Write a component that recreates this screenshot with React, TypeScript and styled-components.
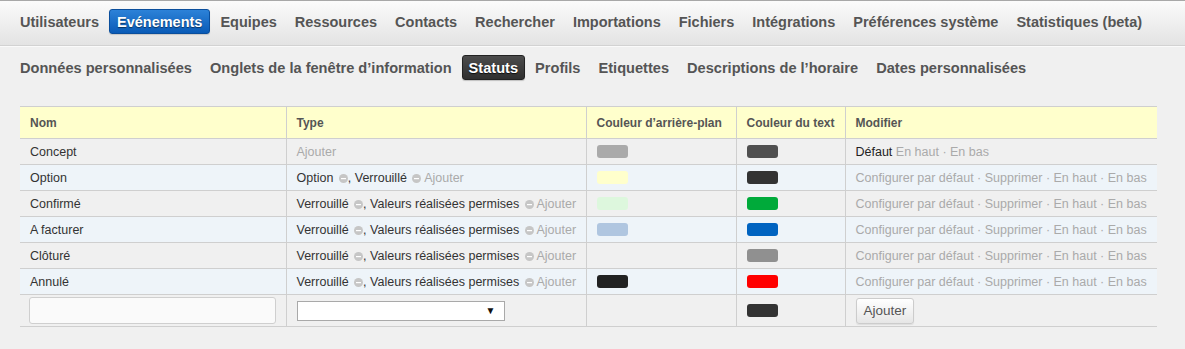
import React from "react";
import styled, { createGlobalStyle, css } from "styled-components";

const Global = createGlobalStyle`
  html, body { margin: 0; padding: 0; background: #f0f0f0; }
  body { font-family: "Liberation Sans", Arial, sans-serif; color: #333; }
`;

const TopBar = styled.nav`
  display: flex;
  align-items: center;
  gap: 2px;
  height: 25px;
  padding: 8px 12px 11px;
  font-size: 14.5px;
  border-top: 1px solid #a8a8a8;
  border-bottom: 1px solid #d2d2d2;
  box-shadow: 0 1px 0 #fafafa;
  background: linear-gradient(#fbfbfb, #e3e3e3);
`;

const SubBar = styled.nav`
  display: flex;
  align-items: center;
  gap: 2px;
  height: 25px;
  padding: 8px 12px 0;
  margin-top: 1px;
  font-size: 14.6px;
`;

const NavItem = styled.a<{ $active?: "blue" | "dark" }>`
  display: flex;
  align-items: center;
  box-sizing: border-box;
  height: 25px;
  padding: 0 7px;
  font-size: inherit;
  font-weight: bold;
  color: #555;
  text-decoration: none;
  white-space: nowrap;
  border-radius: 3px;
  border: 1px solid transparent;
  ${(p) =>
    p.$active === "blue" &&
    css`
      color: #fff;
      background: linear-gradient(#2c82d8, #0a5bb7);
      border-color: #0a4e9c;
      text-shadow: 0 1px 1px rgba(0, 0, 0, 0.5);
      box-shadow: 0 1px 1px rgba(0, 0, 0, 0.15);
    `}
  ${(p) =>
    p.$active === "dark" &&
    css`
      padding: 0 6px;
      color: #fff;
      background: linear-gradient(#4c4c4c, #2f2f2f);
      border-color: #222;
      text-shadow: 0 1px 1px rgba(0, 0, 0, 0.8);
      box-shadow: 0 1px 1px rgba(0, 0, 0, 0.2);
    `}
`;

const TableWrap = styled.div`
  padding: 26px 28px 0 20px;
`;

const Table = styled.table`
  width: 1137px;
  border-collapse: collapse;
  table-layout: fixed;
  font-size: 12.5px;
`;

const HeadCell = styled.th`
  height: 32px;
  padding: 0 10px;
  box-sizing: border-box;
  background: #ffffcc;
  color: #555;
  font-size: 12px;
  font-weight: bold;
  text-align: left;
  border-top: 1px solid #cfcfcf;
  border-bottom: 1px solid #cfcfcf;
  border-left: 1px solid #cfcfcf;
  white-space: nowrap;
  &:first-child { border-left: none; }
`;

const Row = styled.tr<{ $alt?: boolean }>`
  background: ${(p) => (p.$alt ? "#eef4f9" : "transparent")};
`;

const Cell = styled.td<{ $tall?: boolean }>`
  height: ${(p) => (p.$tall ? 32 : 26)}px;
  padding: 0 10px;
  box-sizing: border-box;
  color: #333;
  border-bottom: 1px solid #cfcfcf;
  border-left: 1px solid #cfcfcf;
  white-space: nowrap;
  vertical-align: middle;
  &:first-child { border-left: none; }
`;

const Muted = styled.span`
  color: #aaa;
`;

const Strong = styled.span`
  color: #222;
`;

const Swatch = styled.span<{ $color: string }>`
  display: block;
  width: 31px;
  height: 13px;
  border-radius: 3px;
  background: ${(p) => p.$color};
`;

const IconWrap = styled.svg`
  display: inline-block;
  vertical-align: -1px;
  margin: 0 0 0 2px;
`;

const MinusIcon = () => (
  <IconWrap width="9" height="9" viewBox="0 0 9 9">
    <circle cx="4.5" cy="4.5" r="4.5" fill="#c6c6c6" />
    <rect x="2" y="4" width="5" height="1.2" fill="#fff" />
  </IconWrap>
);

const TextInput = styled.input`
  display: block;
  box-sizing: border-box;
  width: 247px;
  height: 27px;
  margin-left: -1px;
  border: 1px solid #cfcfcf;
  border-radius: 3px;
  background: #fafafa;
`;

const SelectBox = styled.div`
  display: flex;
  align-items: center;
  justify-content: flex-end;
  box-sizing: border-box;
  width: 208px;
  height: 20px;
  padding-right: 8px;
  border: 1px solid #a9a9a9;
  background: #fff;
  font-size: 10px;
  color: #111;
`;

const Button = styled.button`
  box-sizing: border-box;
  height: 26px;
  padding: 0 7px;
  font-family: "Liberation Sans", Arial, sans-serif;
  font-size: 13.5px;
  color: #555;
  border: 1px solid #ccc;
  border-radius: 3px;
  background: linear-gradient(#ffffff, #e6e6e6);
  box-shadow: 0 1px 1px rgba(0, 0, 0, 0.08);
`;

type Status = {
  name: string;
  type: React.ReactNode;
  bg?: string;
  text: string;
  def?: boolean;
};

const Sep = () => <Muted> · </Muted>;

const locked = (
  <>
    Verrouillé <MinusIcon />, Valeurs réalisées permises <MinusIcon /> <Muted>Ajouter</Muted>
  </>
);

const statuses: Status[] = [
  { name: "Concept", type: <Muted>Ajouter</Muted>, bg: "#aaaaaa", text: "#505050", def: true },
  {
    name: "Option",
    type: (
      <>
        Option <MinusIcon />, Verrouillé <MinusIcon /> <Muted>Ajouter</Muted>
      </>
    ),
    bg: "#ffffcc",
    text: "#333333",
  },
  { name: "Confirmé", type: locked, bg: "#ddf7dd", text: "#00aa3a" },
  { name: "A facturer", type: locked, bg: "#b0c6e0", text: "#0063c0" },
  { name: "Clôturé", type: locked, text: "#909090" },
  { name: "Annulé", type: locked, bg: "#222222", text: "#ff0000" },
];

const topItems = [
  "Utilisateurs",
  "Evénements",
  "Equipes",
  "Ressources",
  "Contacts",
  "Rechercher",
  "Importations",
  "Fichiers",
  "Intégrations",
  "Préférences système",
  "Statistiques (beta)",
];

const subItems = [
  "Données personnalisées",
  "Onglets de la fenêtre d’information",
  "Statuts",
  "Profils",
  "Etiquettes",
  "Descriptions de l’horaire",
  "Dates personnalisées",
];

export default function App() {
  return (
    <>
      <Global />
      <TopBar>
        {topItems.map((t) => (
          <NavItem key={t} $active={t === "Evénements" ? "blue" : undefined}>
            {t}
          </NavItem>
        ))}
      </TopBar>
      <SubBar>
        {subItems.map((t) => (
          <NavItem key={t} $active={t === "Statuts" ? "dark" : undefined}>
            {t}
          </NavItem>
        ))}
      </SubBar>
      <TableWrap>
        <Table>
          <colgroup>
            <col style={{ width: 266 }} />
            <col style={{ width: 300 }} />
            <col style={{ width: 150 }} />
            <col style={{ width: 109 }} />
            <col style={{ width: 312 }} />
          </colgroup>
          <thead>
            <tr>
              <HeadCell>Nom</HeadCell>
              <HeadCell>Type</HeadCell>
              <HeadCell>Couleur d’arrière-plan</HeadCell>
              <HeadCell>Couleur du text</HeadCell>
              <HeadCell>Modifier</HeadCell>
            </tr>
          </thead>
          <tbody>
            {statuses.map((s, i) => (
              <Row key={s.name} $alt={i % 2 === 1}>
                <Cell>{s.name}</Cell>
                <Cell>{s.type}</Cell>
                <Cell>{s.bg && <Swatch $color={s.bg} />}</Cell>
                <Cell>
                  <Swatch $color={s.text} />
                </Cell>
                <Cell>
                  {s.def ? (
                    <>
                      <Strong>Défaut</Strong> <Muted>En haut</Muted>
                      <Sep />
                      <Muted>En bas</Muted>
                    </>
                  ) : (
                    <>
                      <Muted>Configurer par défaut</Muted>
                      <Sep />
                      <Muted>Supprimer</Muted>
                      <Sep />
                      <Muted>En haut</Muted>
                      <Sep />
                      <Muted>En bas</Muted>
                    </>
                  )}
                </Cell>
              </Row>
            ))}
            <Row>
              <Cell $tall>
                <TextInput />
              </Cell>
              <Cell $tall>
                <SelectBox>▼</SelectBox>
              </Cell>
              <Cell $tall />
              <Cell $tall>
                <Swatch $color="#333333" />
              </Cell>
              <Cell $tall>
                <Button>Ajouter</Button>
              </Cell>
            </Row>
          </tbody>
        </Table>
      </TableWrap>
    </>
  );
}
